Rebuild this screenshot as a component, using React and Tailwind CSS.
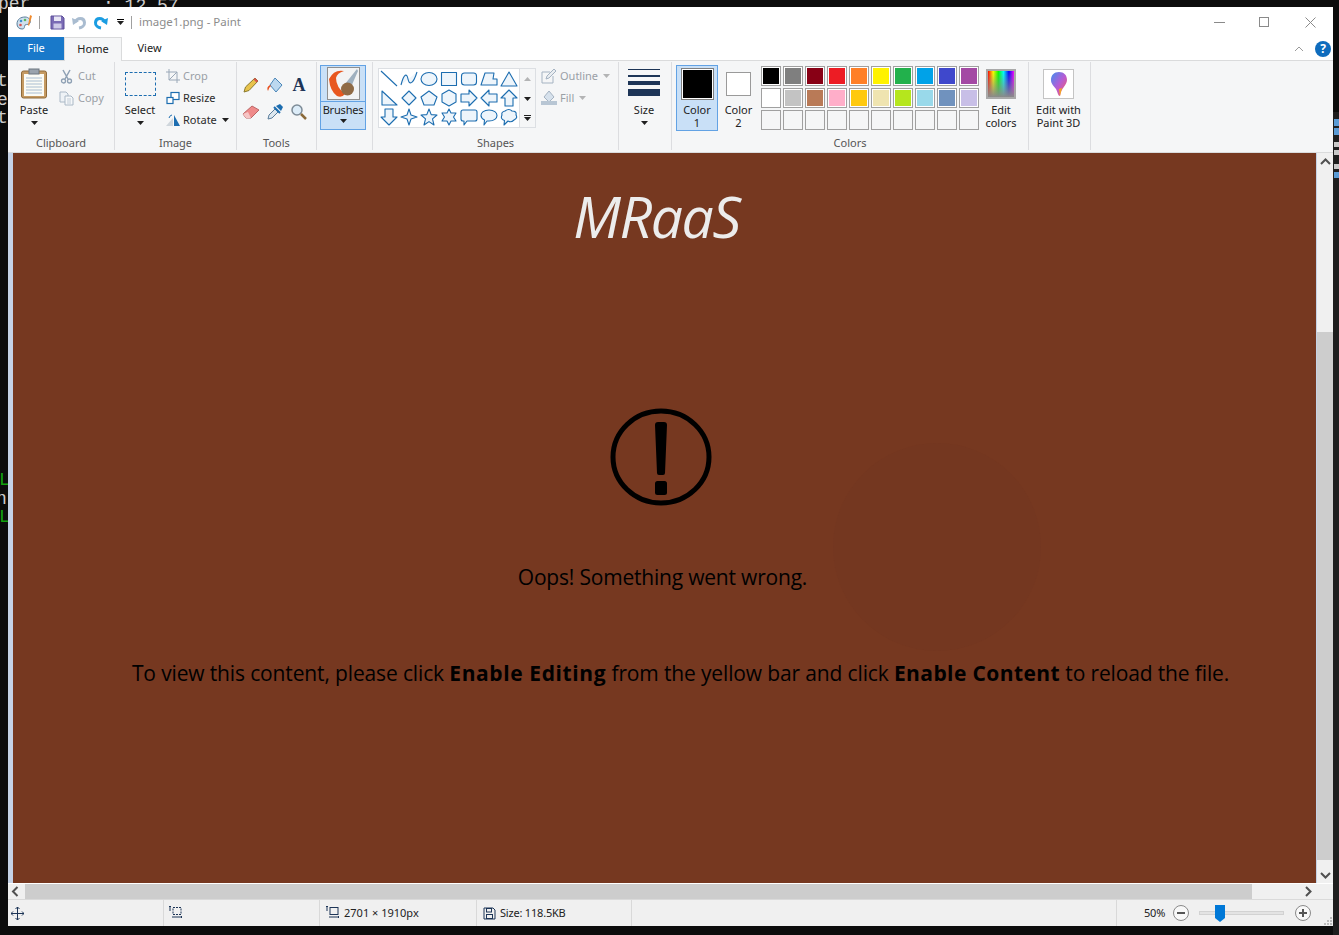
import React from 'react';

const UI_FONT = "font-['Noto_Sans',sans-serif]";

const Caret = ({ className = '' }) => (
  <svg width="7" height="4" viewBox="0 0 7 4" className={className}>
    <path d="M0 0H7L3.5 4Z" fill="#1f1f1f" />
  </svg>
);

const Ico = ({ size = 16, vb = 16, children, className = '' }) => (
  <svg width={size} height={size} viewBox={`0 0 ${vb} ${vb}`} className={`shrink-0 ${className}`} fill="none">
    {children}
  </svg>
);

const SHAPES = [
  <path d="M1 1L17 16" />,
  <path d="M1 15C4 3 7 3 8 9S13 15 17 2" />,
  <ellipse cx="9" cy="9" rx="8" ry="6.5" />,
  <rect x="1.5" y="2.5" width="15" height="13" />,
  <rect x="1.5" y="3" width="15" height="12" rx="3" />,
  <path d="M5 3H14L13 9H17V15H1Z" />,
  <path d="M9 2L17 16H1Z" />,
  <path d="M2 2L17 16H2Z" />,
  <path d="M9 2L16 9L9 16L2 9Z" />,
  <path d="M9 2L17 8L14 16H4L1 8Z" />,
  <path d="M9 1L16 5V13L9 17L2 13V5Z" />,
  <path d="M1 5H9V1L17 9L9 17V13H1Z" />,
  <path d="M17 5H9V1L1 9L9 17V13H17Z" />,
  <path d="M9 1L17 9H13V17H5V9H1Z" />,
  <path d="M9 17L17 9H13V1H5V9H1Z" />,
  <path d="M9 1L11 7L17 9L11 11L9 17L7 11L1 9L7 7Z" />,
  <path d="M9 1L11.2 6.6L17 7L12.5 10.8L14 17L9 13.6L4 17L5.5 10.8L1 7L6.8 6.6Z" />,
  <path d="M9 1L11 5H16L13.5 9L16 13H11L9 17L7 13H2L4.5 9L2 5H7Z" />,
  <path d="M3 2H15Q17 2 17 4V11Q17 13 15 13H7L4 17V13H3Q1 13 1 11V4Q1 2 3 2Z" />,
  <path d="M9 2C14 2 17 4.5 17 7.5C17 10.5 14 13 9 13H7L4 17L4.5 12C2.5 11 1 9.5 1 7.5C1 4.5 4 2 9 2Z" />,
  <path d="M5 3Q9 0 12 3Q17 3 16 7Q18 10 14 12Q11 15 8 13L4 17L4.5 12.5Q0 11 2 7Q1 4 5 3Z" />,
];

const PALETTE = [
  ['#000000', '#7f7f7f', '#880015', '#ed1c24', '#ff7f27', '#fff200', '#22b14c', '#00a2e8', '#3f48cc', '#a349a4'],
  ['#ffffff', '#c3c3c3', '#b97a57', '#ffaec9', '#ffc90e', '#efe4b0', '#b5e61d', '#99d9ea', '#7092be', '#c8bfe7'],
  Array(10).fill(null),
];

function Group({ width, label, children }) {
  return (
    <div style={{ width }} className="h-[88px] shrink-0 flex flex-col border-r border-[#dcdde0]">
      <div className="h-[73px] flex">{children}</div>
      <div className="h-[15px] flex items-center justify-center text-[11px] text-[#555] leading-none">{label}</div>
    </div>
  );
}

function SmallAction({ icon, label, disabled, caret }) {
  return (
    <div className={`h-[22px] flex items-center gap-[3px] text-[11px] ${disabled ? 'text-[#9aa0a6]' : 'text-[#2b2b2b]'}`}>
      {icon}
      <span>{label}</span>
      {caret && <Caret className={`ml-[2px] ${disabled ? 'opacity-30' : ''}`} />}
    </div>
  );
}

function TitleBar() {
  return (
    <div className="h-[30px] bg-white flex items-center pl-[8px] shrink-0">
      {/* paint palette */}
      <Ico size={17} vb={17}>
        <path d="M1 10C1 5 5 3 9 3C13 3 15 6 14 9C13 11 11 10 9 11C8 13 9 15 6 15C3 15 1 13 1 10Z" fill="#cfe0ee" stroke="#5b7e9c" />
        <circle cx="5" cy="7" r="1.3" fill="#3e8fd0" />
        <circle cx="9" cy="6" r="1.3" fill="#5cb85c" />
        <circle cx="4.5" cy="11" r="1.3" fill="#d9534f" />
        <path d="M14 1L16 2L13 12L12 11Z" fill="#f08a2c" />
      </Ico>
      <div className="w-px h-[13px] bg-[#a0a0a0] ml-[6px]" />
      <Ico size={15} vb={15} className="ml-[10px]">
        <path d="M1 1H12L14 3V14H1Z" fill="#7a6bb5" stroke="#5c4f99" />
        <rect x="4" y="1.5" width="7" height="4.5" fill="#e8e6f4" />
        <rect x="3.5" y="8.5" width="8" height="5" fill="#cfcbe8" />
      </Ico>
      <Ico size={15} vb={15} className="ml-[7px]">
        <path d="M3.5 7C5 2.5 12 2 12.5 7.5C12.8 10.5 10 12.5 7 13" stroke="#a9bcd0" strokeWidth="3" />
        <path d="M0 3L7 6L1 10Z" fill="#a9bcd0" />
      </Ico>
      <Ico size={15} vb={15} className="ml-[6px]">
        <path d="M11.5 7C10 2.5 3 2 2.5 7.5C2.2 10.5 5 12.5 8 13" stroke="#1b9de2" strokeWidth="3" />
        <path d="M15 3L8 6L14 10Z" fill="#1b9de2" />
      </Ico>
      <div className="ml-[8px] w-[8px] flex flex-col items-center gap-[1px]">
        <div className="w-[7px] h-[1px] bg-black" />
        <Caret />
      </div>
      <div className="w-px h-[13px] bg-[#a0a0a0] ml-[7px]" />
      <span className="ml-[7px] text-[11.5px] text-[#8c8c8c]">image1.png - Paint</span>
      <div className="ml-auto flex items-center pr-[17px]">
        <div className="w-[11px] h-px bg-[#8a8a8a]" />
        <div className="w-[10px] h-[10px] border border-[#8a8a8a] ml-[34px]" />
        <Ico size={11} vb={11} className="ml-[36px]">
          <path d="M0.5 0.5L10.5 10.5M10.5 0.5L0.5 10.5" stroke="#8a8a8a" />
        </Ico>
      </div>
    </div>
  );
}

function Tabs() {
  return (
    <div className="h-[24px] bg-white flex items-stretch border-b border-[#dadbdc] shrink-0 text-[11px]">
      <div className="w-[56px] h-[23px] bg-[#1979ca] text-white flex items-center justify-center">File</div>
      <div className="w-[58px] h-[24px] bg-[#f5f6f7] border border-b-0 border-[#dadbdc] text-[#222] flex items-center justify-center">Home</div>
      <div className="w-[55px] text-[#222] flex items-center justify-center">View</div>
      <div className="ml-auto flex items-center pr-[2px]">
        <Ico size={10} vb={10}>
          <path d="M1 7L5 3L9 7" stroke="#9a9a9a" />
        </Ico>
        <div className="w-[16px] h-[16px] rounded-full bg-[#0f6cbd] text-white text-[12px] font-bold flex items-center justify-center ml-[11px]">?</div>
      </div>
    </div>
  );
}

function Clipboard() {
  return (
    <Group width={107} label="Clipboard">
      <div className="w-[52px] flex flex-col items-center pt-[6px]">
        <svg width="26" height="31" viewBox="0 0 26 31">
          <rect x="0.5" y="3" width="25" height="27" rx="2" fill="#c59a62" stroke="#8f6a3a" />
          <rect x="3" y="6" width="20" height="22" fill="#fbfbf5" />
          <path d="M5 10H21M5 13H21M5 16H21M5 19H21M5 22H21M5 25H21" stroke="#a9bdd1" />
          <rect x="8" y="1" width="10" height="5" fill="#9aa3ad" stroke="#6d7680" />
        </svg>
        <span className="text-[11px] text-[#222] mt-[3px] leading-[16px]">Paste</span>
        <Caret className="mt-[3px]" />
      </div>
      <div className="flex flex-col pt-[3px] ml-[-1px]">
        <SmallAction
          disabled
          label="Cut"
          icon={
            <Ico size={15} vb={15} className="mr-[1px]">
              <path d="M4 1L9 10M11 1L6 10" stroke="#8ea0b4" strokeWidth="1.5" />
              <circle cx="4.5" cy="12" r="2" stroke="#8ea0b4" strokeWidth="1.3" />
              <circle cx="10.5" cy="12" r="2" stroke="#8ea0b4" strokeWidth="1.3" />
            </Ico>
          }
        />
        <SmallAction
          disabled
          label="Copy"
          icon={
            <Ico size={15} vb={15} className="mr-[1px]">
              <path d="M1 1H7L9 3V11H1Z" fill="#eef2f6" stroke="#aab8c6" />
              <path d="M6 5H12L14 7V14H6Z" fill="#f6f8fa" stroke="#aab8c6" />
              <path d="M8 8H12M8 10H12M8 12H12" stroke="#c1ccd7" />
            </Ico>
          }
        />
      </div>
    </Group>
  );
}

function ImageGroup() {
  return (
    <Group width={122} label="Image">
      <div className="w-[50px] flex flex-col items-center pt-[10px]">
        <div className="w-[31px] h-[24px] border border-dashed border-[#1c6db0]" />
        <span className="text-[11px] text-[#222] mt-[6px] leading-[16px]">Select</span>
        <Caret className="mt-[3px]" />
      </div>
      <div className="flex flex-col pt-[3px] ml-[1px]">
        <SmallAction
          disabled
          label="Crop"
          icon={
            <Ico size={14} vb={14}>
              <path d="M3 0V11H14M0 3H11V14M3 11L11 3" stroke="#9aa8b8" />
            </Ico>
          }
        />
        <SmallAction
          label="Resize"
          icon={
            <Ico size={14} vb={14}>
              <rect x="5" y="1.5" width="8" height="7" fill="#fff" stroke="#1c6db0" strokeWidth="1.2" />
              <rect x="1" y="6.5" width="6" height="6" fill="#fff" stroke="#1c6db0" strokeWidth="1.2" />
            </Ico>
          }
        />
        <SmallAction
          caret
          label="Rotate"
          icon={
            <Ico size={14} vb={14}>
              <path d="M0 13L7 5V13Z" fill="#cfd6dc" />
              <path d="M8 2L14 13H8Z" fill="#1c6db0" />
              <path d="M3 5Q4 2 6 2" stroke="#1c6db0" />
            </Ico>
          }
        />
      </div>
    </Group>
  );
}

function ToolsGroup() {
  return (
    <Group width={80} label="Tools">
      <div className="grid grid-cols-3 grid-rows-2 gap-y-[6px] w-[72px] ml-[2px] mt-[12px] h-[48px] place-items-center">
        <Ico size={18} vb={18}>
          <path d="M2 16L3.5 11L13 2L16 5L7 14.5Z" fill="#e8c34c" stroke="#8a7a2e" />
          <path d="M13 2L16 5L14.5 6.5L11.5 3.5Z" fill="#d9534f" />
        </Ico>
        <Ico size={18} vb={18}>
          <path d="M9 2L16 9L10 16L4 9Z" fill="#bcd8ef" stroke="#4a86b8" />
          <path d="M4 9Q0 11 2 15Q3 11 5 10Z" fill="#e8501f" />
        </Ico>
        <span className="font-['Liberation_Serif',serif] font-bold text-[18px] text-[#1d3557] leading-none">A</span>
        <Ico size={18} vb={18}>
          <path d="M1 11L10 3L17 7L9 15H4Z" fill="#ef8a8a" stroke="#b66" />
          <path d="M1 11L4 15H9L6 9Z" fill="#f6c5c5" />
        </Ico>
        <Ico size={18} vb={18}>
          <path d="M2 16L3 12L9 6L12 9L6 15Z" fill="#dde7ef" stroke="#5a7d9c" />
          <path d="M10 3L14 1L17 4L15 8Z" fill="#1c6db0" />
          <path d="M8 4L14 10" stroke="#1c6db0" strokeWidth="2" />
        </Ico>
        <Ico size={18} vb={18}>
          <circle cx="7" cy="7" r="5" fill="#dcecf8" stroke="#7d8b97" strokeWidth="1.5" />
          <path d="M11 11L16 16" stroke="#8a6a3a" strokeWidth="2.5" />
        </Ico>
      </div>
    </Group>
  );
}

function BrushesGroup() {
  return (
    <Group width={56} label="">
      <div className="w-[46px] h-[65px] ml-[3px] mt-[3px] bg-[#c9e0f7] border border-[#62a2e4] flex flex-col items-center">
        <div className="h-[36px] w-full flex items-center justify-center border-b border-[#62a2e4]">
          <svg width="33" height="33" viewBox="0 0 33 33">
            <rect x="0.5" y="0.5" width="32" height="32" fill="#f2f3f4" stroke="#8f8f8f" />
            <path d="M2 12Q7 2 17 4Q10 6 9 11Q9 20 18 27Q15 31 10 29Q3 24 2 12Z" fill="#e8571f" />
            <path d="M18 17L30 2L31 4L24 20Z" fill="#9fb0bf" />
            <ellipse cx="20.5" cy="22" rx="6.5" ry="6.5" fill="#8f6a45" />
          </svg>
        </div>
        <span className="text-[11px] text-[#222] leading-[15px] tracking-[-0.2px]">Brushes</span>
        <Caret className="mt-[2px]" />
      </div>
    </Group>
  );
}

function ShapesGroup() {
  return (
    <Group width={246} label="Shapes">
      <div className="ml-[5px] mt-[6px] w-[158px] h-[60px] border border-[#dcdfe3] bg-white flex">
        <div className="w-[140px] grid grid-cols-7 grid-rows-3 place-items-center">
          {SHAPES.map((s, i) => (
            <svg key={i} width="18" height="18" viewBox="0 0 18 18" fill="#eef5fb" stroke="#1c6db0" strokeWidth="1.1" strokeLinejoin="round">
              {s}
            </svg>
          ))}
        </div>
        <div className="flex-1 bg-[#f5f6f7] border-l border-[#dcdfe3] flex flex-col items-center">
          <div className="h-[20px] flex items-center">
            <Caret className="rotate-180 opacity-30" />
          </div>
          <div className="h-[20px] flex items-center">
            <Caret />
          </div>
          <div className="h-[18px] flex flex-col items-center justify-center gap-[1px]">
            <div className="w-[7px] h-px bg-[#222]" />
            <Caret />
          </div>
        </div>
      </div>
      <div className="flex flex-col pt-[3px] ml-[5px]">
        <SmallAction
          disabled
          caret
          label="Outline"
          icon={
            <Ico size={16} vb={16}>
              <path d="M1 4H9M1 4V15H12V8" stroke="#a5b3c2" />
              <path d="M5 11L6 8L13 1L15 3L8 10Z" fill="#e9edf1" stroke="#a5b3c2" />
            </Ico>
          }
        />
        <SmallAction
          disabled
          caret
          label="Fill"
          icon={
            <Ico size={16} vb={16}>
              <path d="M8 1L13 7L8 12L3 7Z" fill="#d6e1ec" stroke="#a5b3c2" />
              <rect x="0" y="11" width="16" height="4" fill="#b8c6d4" />
            </Ico>
          }
        />
      </div>
    </Group>
  );
}

function SizeGroup() {
  return (
    <Group width={53} label="">
      <div className="w-full flex flex-col items-center pt-[7px] pr-[2px]">
        <div className="w-[32px] flex flex-col">
          <div className="h-px bg-[#1d3557]" />
          <div className="h-[2px] bg-[#1d3557] mt-[5px]" />
          <div className="h-[4px] bg-[#1d3557] mt-[4px]" />
          <div className="h-[7px] bg-[#1d3557] mt-[4px]" />
        </div>
        <span className="text-[11px] text-[#222] mt-[6px] leading-[16px]">Size</span>
        <Caret className="mt-[3px]" />
      </div>
    </Group>
  );
}

function ColorsGroup() {
  return (
    <Group width={357} label="Colors">
      <div className="ml-[4px] mt-[3px] w-[42px] h-[66px] bg-[#c9e0f7] border border-[#62a2e4] flex flex-col items-center pt-[2px]">
        <div className="w-[33px] h-[32px] border border-[#7f7f7f] p-px bg-white">
          <div className="w-full h-full bg-black" />
        </div>
        <span className="text-[11px] text-[#222] leading-[13px] mt-[3px] text-center">
          Color
          <br />1
        </span>
      </div>
      <div className="ml-[2px] mt-[3px] w-[37px] flex flex-col items-center pt-[7px]">
        <div className="w-[25px] h-[24px] border border-[#9a9a9a] bg-white" />
        <span className="text-[11px] text-[#222] leading-[13px] mt-[7px] text-center">
          Color
          <br />2
        </span>
      </div>
      <div className="ml-[4px] mt-[4px] grid grid-cols-10 gap-[2px] h-[64px] w-[218px]">
        {PALETTE.flat().map((c, i) => (
          <div key={i} className={`w-[20px] h-[20px] border border-[#a0a0a0] p-px ${c ? 'bg-white' : ''}`}>
            {c && <div className="w-full h-full" style={{ backgroundColor: c }} />}
          </div>
        ))}
      </div>
      <div className="w-[44px] flex flex-col items-center pt-[7px]">
        <div className="w-[30px] h-[30px] border-2 border-[#a9a9a9] bg-[linear-gradient(to_bottom,transparent,#8a8a8a),linear-gradient(to_right,#ff0000,#ffff00,#00ff00,#00ffff,#0000ff,#ff00ff)]" />
        <span className="text-[11px] text-[#222] leading-[13px] mt-[4px] text-center">
          Edit
          <br />
          colors
        </span>
      </div>
    </Group>
  );
}

function Paint3D() {
  return (
    <Group width={62} label="">
      <div className="w-full flex flex-col items-center pt-[7px] pr-[2px]">
        <div className="w-[31px] h-[30px] border border-[#c4c4c4] bg-white flex items-center justify-center">
          <svg width="18" height="26" viewBox="0 0 18 26">
            <defs>
              <linearGradient id="p3d" x1="0" y1="0" x2="1" y2="1">
                <stop offset="0" stopColor="#3f8ff0" />
                <stop offset="0.5" stopColor="#b45cd6" />
                <stop offset="1" stopColor="#ff5a5a" />
              </linearGradient>
            </defs>
            <path d="M9 1C14 1 17 4 17 9C17 14 11 17 10 25C8 25 8 22 6 18C4 15 1 13 1 9C1 4 4 1 9 1Z" fill="url(#p3d)" />
            <path d="M9 18L12 17L10 25Z" fill="#f5a623" />
          </svg>
        </div>
        <span className="text-[11px] text-[#222] leading-[13px] mt-[4px] text-center whitespace-nowrap">
          Edit with
          <br />
          Paint 3D
        </span>
      </div>
    </Group>
  );
}

function Ribbon() {
  return (
    <div className="h-[92px] bg-[#f5f6f7] border-b border-[#dadbdc] flex pt-[1px] shrink-0">
      <Clipboard />
      <ImageGroup />
      <ToolsGroup />
      <BrushesGroup />
      <ShapesGroup />
      <SizeGroup />
      <ColorsGroup />
      <Paint3D />
    </div>
  );
}

function Canvas() {
  return (
    <div className="relative flex-1 bg-[#763820] flex flex-col items-center overflow-hidden font-['Open_Sans',sans-serif] text-black">
      <div className="absolute left-[820px] top-[290px] w-[208px] h-[208px] rounded-full bg-[#743720]" />
      <div className="relative mt-[22px] mr-[16px] text-[57px] leading-[82px] italic text-[#ececec] tracking-[-1.4px]">MRaaS</div>
      <svg width="102" height="100" viewBox="0 0 102 100" className="relative mt-[150px] mr-[8px]">
        <ellipse cx="51" cy="50" rx="48" ry="46" fill="none" stroke="#000" strokeWidth="5" />
        <path d="M45 18Q45 15 48 15H54Q57 15 57 18L55 66Q55 68 53 68H49Q47 68 47 66Z" fill="#000" />
        <rect x="45" y="74" width="12" height="14" rx="2.5" fill="#000" />
      </svg>
      <div className="relative mt-[56px] mr-[4px] text-[21px] leading-[28px] tracking-[-0.2px]">Oops! Something went wrong.</div>
      <div className="relative mt-[68px] ml-[32px] text-[21px] leading-[28px] whitespace-nowrap tracking-[-0.14px]">
        To view this content, please click <b className="tracking-[0.6px]">Enable Editing</b> from the yellow bar and click <b className="tracking-[0.4px]">Enable Content</b> to reload the file.
      </div>
    </div>
  );
}

function VScroll() {
  return (
    <div className="w-[16px] ml-px bg-[#f0f0f0] flex flex-col items-center pt-[3px] pb-[2px]">
      <Ico size={11} vb={11}>
        <path d="M1 8L5.5 3.5L10 8" stroke="#505050" strokeWidth="2" />
      </Ico>
      <div className="w-full h-[528px] bg-[#cdcdcd] mt-[165px]" />
      <Ico size={11} vb={11} className="mt-auto">
        <path d="M1 3L5.5 7.5L10 3" stroke="#505050" strokeWidth="2" />
      </Ico>
    </div>
  );
}

function HScroll() {
  return (
    <div className="h-[16px] bg-[#f0f0f0] flex items-center pr-[19px] shrink-0 border-t border-white">
      <Ico size={11} vb={11} className="ml-[2px]">
        <path d="M7.5 1L3 5.5L7.5 10" stroke="#505050" strokeWidth="2" />
      </Ico>
      <div className="w-[1227px] h-full bg-[#cdcdcd] ml-[4px]" />
      <Ico size={11} vb={11} className="ml-auto">
        <path d="M3 1L7.5 5.5L3 10" stroke="#505050" strokeWidth="2" />
      </Ico>
    </div>
  );
}

function StatusBar() {
  const cell = 'h-[26px] flex items-center border-r border-[#d9d9d9] shrink-0';
  return (
    <div className="h-[27px] bg-[#f0f0f0] border-t border-[#dadada] flex items-center text-[11px] text-[#222] tracking-[-0.2px] shrink-0">
      <div className={`${cell} w-[156px] pl-[3px]`}>
        <Ico size={13} vb={13}>
          <path d="M6.5 0V13M0 6.5H13M4.5 2L6.5 0L8.5 2M4.5 11L6.5 13L8.5 11M2 4.5L0 6.5L2 8.5M11 4.5L13 6.5L11 8.5" stroke="#1d3557" />
        </Ico>
      </div>
      <div className={`${cell} w-[156px] pl-[5px]`}>
        <Ico size={14} vb={14}>
          <path d="M1 0V5M0 1L1 0L2 1M3 11H13M12 10L13 11L12 12" stroke="#1d3557" />
          <rect x="4" y="1.5" width="8" height="7" stroke="#1d3557" strokeDasharray="2 1" />
        </Ico>
      </div>
      <div className={`${cell} w-[157px] pl-[6px] gap-[4px]`}>
        <Ico size={14} vb={14}>
          <path d="M1 0V5M0 1L1 0L2 1M3 11H13M12 10L13 11L12 12" stroke="#1d3557" />
          <rect x="4" y="1.5" width="8" height="7" stroke="#1d3557" />
        </Ico>
        <span className="tracking-normal">2701 × 1910px</span>
      </div>
      <div className={`${cell} w-[155px] pl-[6px] gap-[4px]`}>
        <Ico size={13} vb={13}>
          <path d="M1 1H10L12 3V12H1Z" stroke="#1d3557" />
          <rect x="3.5" y="1.5" width="5" height="3.5" stroke="#1d3557" />
          <rect x="3.5" y="7.5" width="6" height="4" stroke="#1d3557" />
        </Ico>
        <span>Size: 118.5KB</span>
      </div>
      <div className={`${cell} w-[485px]`} />
      <div className="flex items-center flex-1 pl-[27px] h-full relative">
        <span>50%</span>
        <div className="w-[16px] h-[16px] rounded-full border border-[#8a8a8a] bg-[#f8f8f8] flex items-center justify-center ml-[8px]">
          <div className="w-[8px] h-[2px] bg-[#555]" />
        </div>
        <div className="relative w-[85px] h-[4px] bg-[#e3e3e3] border border-[#d2d2d2] ml-[10px]">
          <div className="absolute left-[15px] -top-[7px] w-[10px] h-[13px] bg-[#0078d7]" />
          <div className="absolute left-[15px] top-[6px] w-0 h-0 border-x-[5px] border-x-transparent border-t-[4px] border-t-[#0078d7]" />
        </div>
        <div className="w-[16px] h-[16px] rounded-full border border-[#8a8a8a] bg-[#f8f8f8] flex items-center justify-center ml-[11px] relative">
          <div className="w-[8px] h-[2px] bg-[#555]" />
          <div className="absolute w-[2px] h-[8px] bg-[#555]" />
        </div>
        {/* resize grip */}
        <div className="absolute right-[1px] bottom-[1px] grid grid-cols-3 gap-px w-[8px] h-[8px]">
          <span />
          <span />
          <span className="bg-[#bdbdbd]" />
          <span />
          <span className="bg-[#bdbdbd]" />
          <span className="bg-[#bdbdbd]" />
          <span className="bg-[#bdbdbd]" />
          <span className="bg-[#bdbdbd]" />
          <span className="bg-[#bdbdbd]" />
        </div>
      </div>
    </div>
  );
}

export default function App() {
  return (
    <div className={`relative w-[1339px] h-[935px] overflow-hidden bg-[#0c0c0c] ${UI_FONT}`}>
      {/* console window showing behind Paint */}
      <div className="absolute inset-0 font-['Liberation_Mono',monospace] text-[18px] text-[#cccccc] leading-none">
        <span className="absolute -left-[2px] -top-[5px]">per</span>
        <span className="absolute left-[103px] -top-[3px] whitespace-pre">: 12 57</span>
        <span className="absolute -left-[3px] top-[72px]">t</span>
        <span className="absolute -left-[3px] top-[91px]">e</span>
        <span className="absolute -left-[3px] top-[109px]">t</span>
        <span className="absolute -left-[1px] top-[471px] text-[#13a10e]">L</span>
        <span className="absolute -left-[4px] top-[490px]">n</span>
        <span className="absolute -left-[1px] top-[508px] text-[#13a10e]">L</span>
        <div className="absolute right-0 top-[112px] w-[6px] h-[823px] bg-[#1e1e1e]" />
        <div className="absolute right-0 top-[119px] w-[5px] h-[7px] bg-[#5a9bd5]" />
        <div className="absolute right-0 top-[128px] w-[5px] h-[7px] bg-[#5a9bd5]" />
        <div className="absolute right-0 top-[142px] w-[5px] h-[5px] bg-[#c8c8c8]" />
        <div className="absolute right-0 top-[150px] w-[5px] h-[5px] bg-[#c8c8c8]" />
        <div className="absolute right-0 top-[164px] w-[5px] h-[5px] bg-[#c8c8c8]" />
        <div className="absolute right-0 top-[172px] w-[5px] h-[6px] bg-[#5a9bd5]" />
      </div>

      <div className="relative ml-[8px] mt-[7px] w-[1325px] h-[919px] flex flex-col bg-white">
        <TitleBar />
        <Tabs />
        <Ribbon />
        <div className="flex-1 flex min-h-0 bg-[#c5d2e6] pl-[5px]">
          <Canvas />
          <VScroll />
        </div>
        <HScroll />
        <StatusBar />
      </div>
    </div>
  );
}
